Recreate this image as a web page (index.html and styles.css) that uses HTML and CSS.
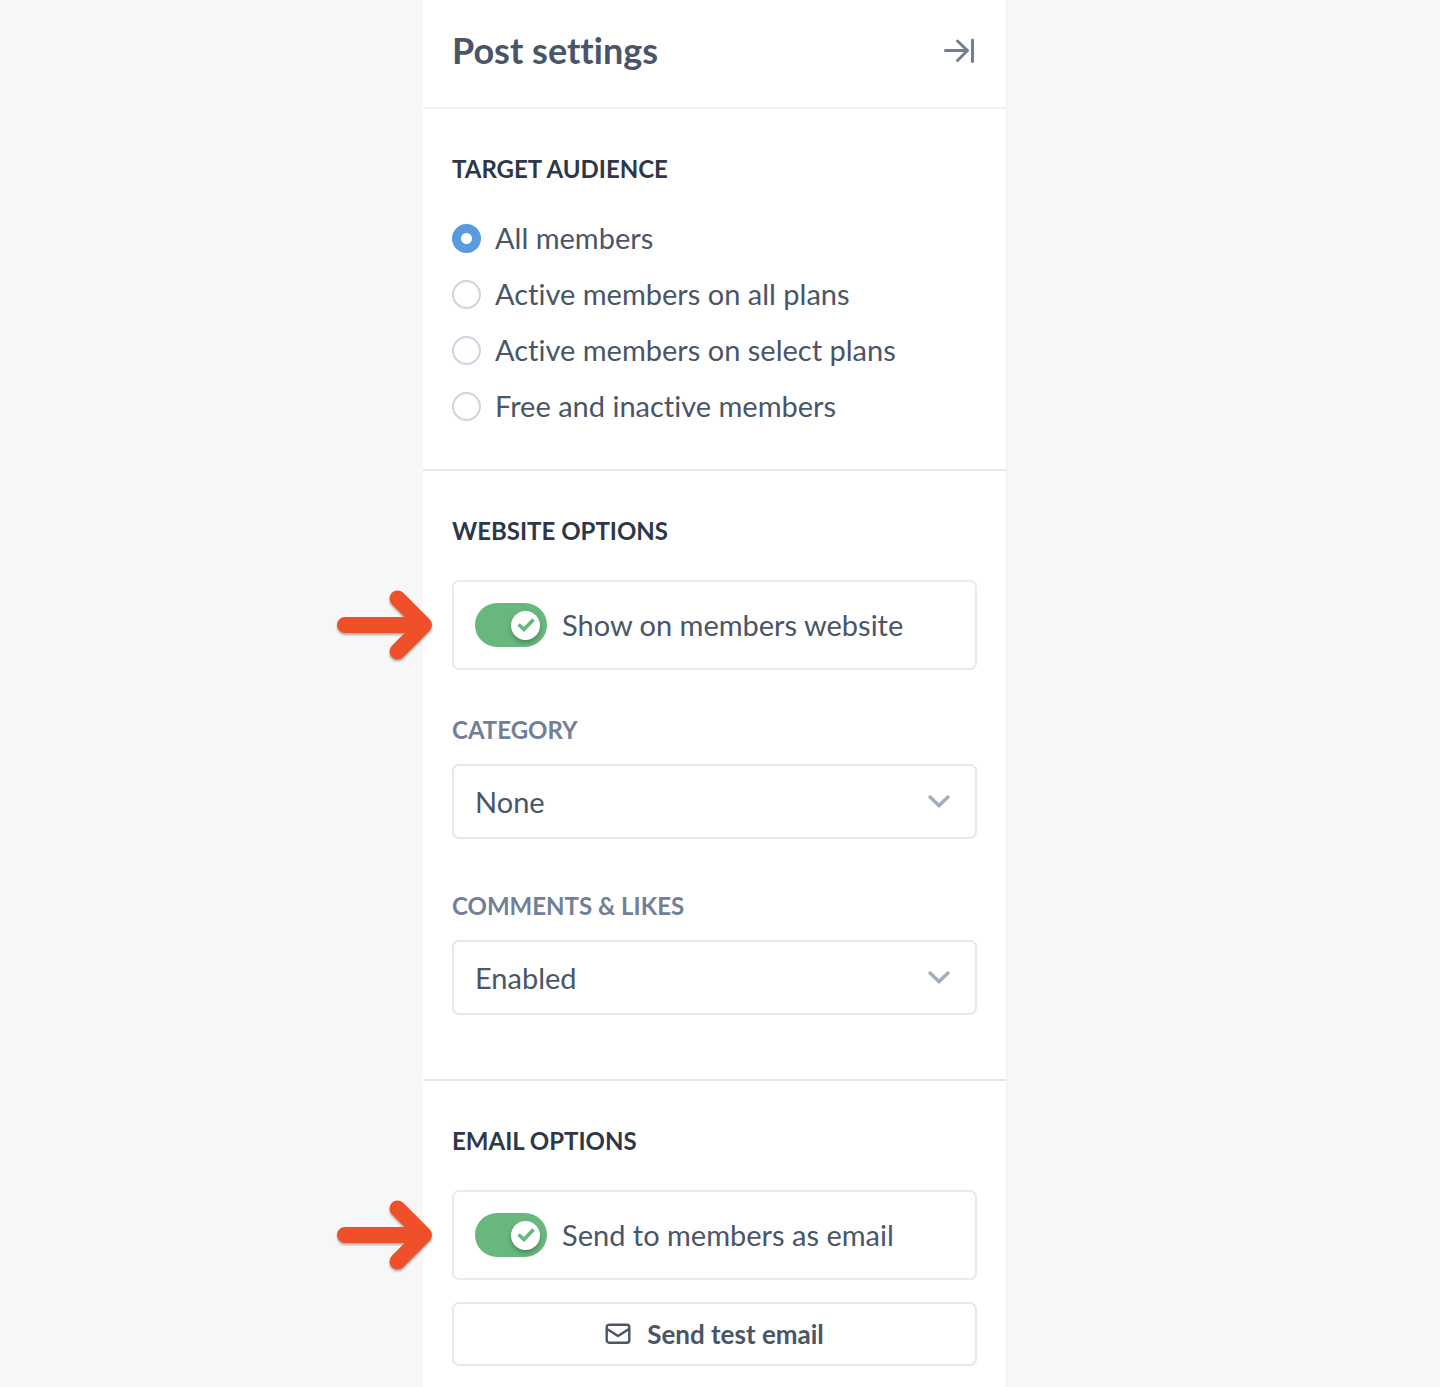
FILE: index.html
```html
<!DOCTYPE html>
<html lang="en">
<head>
<meta charset="utf-8">
<meta name="viewport" content="width=device-width, initial-scale=1">
<title>Post settings</title>
<link rel="stylesheet" href="styles.css">
</head>
<body>
<svg class="defs" aria-hidden="true">
  <symbol id="pointer" viewBox="0 0 96 72">
    <path d="M8 36H86M60.500 9.500L87 36L60.500 62.500" fill="none" stroke="#f05029" stroke-width="16" stroke-linecap="round" stroke-linejoin="round"/>
  </symbol>
  <symbol id="chevron" viewBox="0 0 24 16">
    <path d="M3 3L12 11.500L21 3" fill="none" stroke="#a0aec0" stroke-width="3.500" stroke-linecap="round" stroke-linejoin="miter"/>
  </symbol>
</svg>
<main class="panel">
  <header class="panel-header">
    <h1 class="title">Post settings</h1>
    <button class="collapse" type="button" aria-label="Collapse panel">
      <svg width="34" height="26" viewBox="0 0 34 26" fill="none" stroke="#718096" stroke-width="3" stroke-linecap="round" stroke-linejoin="round">
        <path d="M2.500 13.500H24.500M14.500 4L24.500 13.500L14.500 23.500M29.500 3V24.500"/>
      </svg>
    </button>
  </header>

  <section class="section">
    <h2 class="heading" id="audience">Target audience</h2>
    <div class="radios" role="radiogroup" aria-labelledby="audience">
      <label class="option"><input class="radio" type="radio" name="audience" checked>All members</label>
      <label class="option"><input class="radio" type="radio" name="audience">Active members on all plans</label>
      <label class="option"><input class="radio" type="radio" name="audience">Active members on select plans</label>
      <label class="option"><input class="radio" type="radio" name="audience">Free and inactive members</label>
    </div>
  </section>

  <section class="section section-website">
    <h2 class="heading">Website options</h2>
    <div class="card">
      <svg class="pointer" aria-hidden="true"><use href="#pointer"/></svg>
      <label class="switch-row">
        <span class="switch">
          <input class="switch-input" type="checkbox" checked>
          <span class="knob"><svg width="18" height="16" viewBox="0 0 18 16" fill="none" stroke="#68b77e" stroke-width="3.600"><path d="M1.500 7.500L7 12.500L16.500 2.500"/></svg></span>
        </span>
        Show on members website
      </label>
    </div>
    <div class="field">
      <label class="field-label" for="category">Category</label>
      <div class="select-wrap">
        <select class="select" id="category"><option>None</option></select>
        <svg class="chevron" aria-hidden="true"><use href="#chevron"/></svg>
      </div>
    </div>
    <div class="field">
      <label class="field-label" for="comments">Comments &amp; likes</label>
      <div class="select-wrap">
        <select class="select" id="comments"><option>Enabled</option><option>Disabled</option></select>
        <svg class="chevron" aria-hidden="true"><use href="#chevron"/></svg>
      </div>
    </div>
  </section>

  <section class="section section-email">
    <h2 class="heading">Email options</h2>
    <div class="card">
      <svg class="pointer" aria-hidden="true"><use href="#pointer"/></svg>
      <label class="switch-row">
        <span class="switch">
          <input class="switch-input" type="checkbox" checked>
          <span class="knob"><svg width="18" height="16" viewBox="0 0 18 16" fill="none" stroke="#68b77e" stroke-width="3.600"><path d="M1.500 7.500L7 12.500L16.500 2.500"/></svg></span>
        </span>
        Send to members as email
      </label>
    </div>
    <button class="test-button" type="button">
      <svg width="26" height="22" viewBox="0 0 26 22" fill="none" stroke="#4a5568" stroke-width="2.400" stroke-linejoin="round" aria-hidden="true">
        <rect x="1.700" y="1.700" width="22.600" height="18" rx="2.500"/>
        <path d="M2 6L13 13L24 6"/>
      </svg>
      Send test email
    </button>
  </section>
</main>
</body>
</html>
```
FILE: styles.css
```css
* {
  box-sizing: border-box;
}

body {
  margin: 0;
  min-height: 100vh;
  display: grid;
  grid-template-columns: 423fr minmax(0, 584px) 433fr;
  background: #f7f7f7;
  color: #4a5568;
  font-family: Lato, "Open Sans", sans-serif;
  font-size: 29px;
  font-variant-ligatures: none;
}

.defs {
  display: none;
}

.panel {
  grid-column: 2;
  background: #fff;
  border-right: 1px solid #ececee;
}

.panel-header {
  display: flex;
  align-items: center;
  justify-content: space-between;
  padding: 29px 29px 36px;
  border-bottom: 2px solid #edf2f7;
}

.title {
  margin: 0;
  font-size: 36px;
  line-height: 42px;
  font-weight: 700;
}

.collapse {
  display: flex;
  padding: 0;
  border: 0;
  background: none;
  cursor: pointer;
}

.section {
  padding: 47px 29px 43px;
  border-bottom: 2px solid #e2e8f0;
}

.section-website {
  padding-bottom: 64px;
}

.section-email {
  padding-bottom: 20px;
  border-bottom: 0;
}

.heading {
  margin: 0 0 36px;
  color: #2d3748;
  font-size: 24px;
  line-height: 26px;
  font-weight: 700;
  text-transform: uppercase;
}

.radios {
  display: grid;
  gap: 16px;
}

.option {
  display: flex;
  align-items: center;
  gap: 14px;
  line-height: 40px;
}

.radio {
  appearance: none;
  flex: none;
  width: 29px;
  height: 29px;
  margin: 0;
  border: 2px solid #cbd5e0;
  border-radius: 50%;
  background: #fff;
}

.radio:checked {
  border: 9px solid #5a9ade;
}

.card {
  position: relative;
  padding: 21px;
  border: 2px solid #e6eaf2;
  border-radius: 7px;
}

.pointer {
  position: absolute;
  top: 7px;
  left: -117px;
  width: 96px;
  height: 72px;
  filter: drop-shadow(0 2px 1px rgba(0, 0, 0, 0.3));
}

.switch-row {
  display: flex;
  align-items: center;
  gap: 15px;
  line-height: 44px;
}

.switch {
  display: grid;
  align-items: center;
}

.switch-input {
  appearance: none;
  grid-area: 1 / 1;
  width: 72px;
  height: 44px;
  margin: 0;
  border-radius: 22px;
  background: #cbd5e0;
}

.switch-input:checked {
  background: #68b77e;
}

.knob {
  grid-area: 1 / 1;
  justify-self: end;
  display: flex;
  align-items: center;
  justify-content: center;
  width: 29px;
  height: 29px;
  margin-right: 7px;
  border-radius: 50%;
  background: #fff;
  box-shadow: 0 3px 4px rgba(0, 0, 0, 0.25);
  pointer-events: none;
}

.field {
  margin-top: 54px;
}

.card + .field {
  margin-top: 47px;
}

.field-label {
  display: block;
  margin-bottom: 21px;
  color: #718096;
  font-size: 24px;
  line-height: 26px;
  font-weight: 700;
  text-transform: uppercase;
}

.select-wrap {
  display: grid;
  align-items: center;
}

.select {
  appearance: none;
  grid-area: 1 / 1;
  width: 100%;
  height: 75px;
  padding: 0 60px 0 21px;
  border: 2px solid #e2e8f0;
  border-radius: 7px;
  background: #fff;
  color: inherit;
  font: inherit;
}

.chevron {
  grid-area: 1 / 1;
  justify-self: end;
  width: 24px;
  height: 16px;
  margin-right: 26px;
  pointer-events: none;
}

.test-button {
  display: flex;
  align-items: center;
  justify-content: center;
  gap: 16px;
  width: 100%;
  height: 64px;
  margin-top: 22px;
  padding: 0;
  border: 2px solid #e2e8f0;
  border-radius: 7px;
  background: #fff;
  color: inherit;
  font: inherit;
  font-size: 26px;
  font-weight: 700;
  cursor: pointer;
}
```
